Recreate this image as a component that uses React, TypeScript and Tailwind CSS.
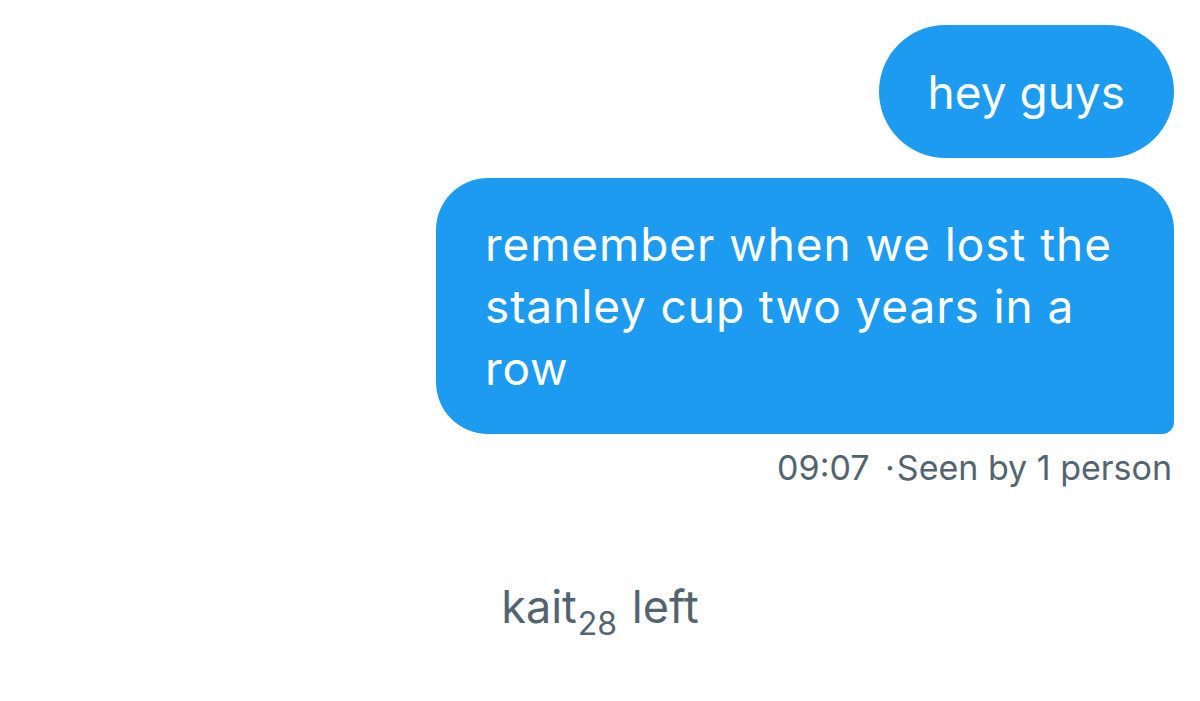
import React from "react";

const App = () => {
  return (
    <div className="w-[1200px] h-[701px] bg-white overflow-hidden [font-family:Inter,'Noto_Sans',sans-serif]">
      <div className="flex flex-col items-end pt-[25px] pr-[26px]">
        <div className="bg-[#1d9bf0] text-white rounded-full h-[133px] px-[49px] flex items-center text-[46px] leading-[62px]">
          hey guys
        </div>
        <div className="mt-[20px] w-[738px] bg-[#1d9bf0] text-white rounded-[52px] rounded-br-[12px] px-[49px] pt-[35px] pb-[35px] text-[46px] leading-[62px] tracking-[0.9px]">
          remember when we lost the stanley cup two years in a row
        </div>
        <div className="mt-[14px] pr-[2px] text-[34px] leading-[40px] text-[#536471]">
          09:07 <span className="ml-[6px] mr-[2px]">·</span>Seen by 1 person
        </div>
      </div>
      <div className="mt-[94px] flex justify-center text-[45px] leading-[50px] text-[#536471]">
        <span>
          kait<sub className="text-[32px] align-[-4px] ml-[1px] mr-[2px]">28</sub> left
        </span>
      </div>
    </div>
  );
};

export default App;
